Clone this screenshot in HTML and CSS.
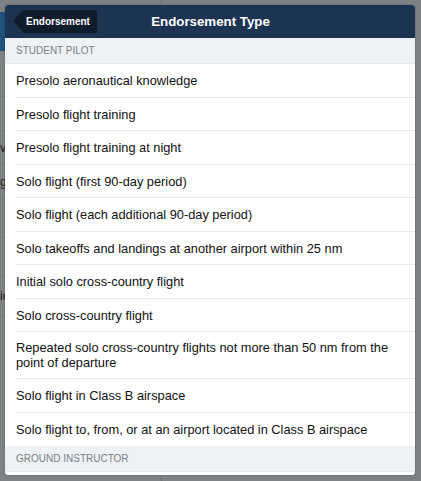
FILE: index.html
```html
<!DOCTYPE html>
<html>
<head>
<meta charset="utf-8">
<link rel="stylesheet" href="styles.css">
</head>
<body>
<div class="page">
  <div class="left-pane">
    <div class="left-bar"></div>
    <div class="left-row tall"></div>
    <div class="left-row"></div>
    <div class="left-row"><span class="frag">v</span></div>
    <div class="left-row"><span class="frag">g</span></div>
    <div class="left-row mid"></div>
    <div class="left-row mid"></div>
    <div class="left-row mid"><span class="frag">ic</span></div>
  </div>
  <div class="right-pane"></div>

  <div class="popover">
    <div class="nav">
      <div class="back"><span class="back-arrow"></span><span class="back-label">Endorsement</span></div>
      <div class="title">Endorsement Type</div>
    </div>
    <div class="list">
      <div class="section">STUDENT PILOT</div>
      <div class="row">Presolo aeronautical knowledge</div>
      <div class="row">Presolo flight training</div>
      <div class="row">Presolo flight training at night</div>
      <div class="row">Solo flight (first 90-day period)</div>
      <div class="row">Solo flight (each additional 90-day period)</div>
      <div class="row">Solo takeoffs and landings at another airport within 25 nm</div>
      <div class="row">Initial solo cross-country flight</div>
      <div class="row">Solo cross-country flight</div>
      <div class="row multi">Repeated solo cross-country flights not more than 50 nm from the point of departure</div>
      <div class="row">Solo flight in Class B airspace</div>
      <div class="row last">Solo flight to, from, or at an airport located in Class B airspace</div>
      <div class="section">GROUND INSTRUCTOR</div>
      <div class="row"></div>
    </div>
  </div>
</div>
</body>
</html>
```

FILE: styles.css
```css
html, body {
  margin: 0;
  padding: 0;
}
body {
  width: 421px;
  height: 481px;
  overflow: hidden;
  background: #7f8285;
  font-family: "Liberation Sans", Arial, sans-serif;
}
.page {
  position: relative;
  display: flex;
  width: 421px;
  height: 481px;
}
.left-pane {
  width: 162px;
  border-right: 1px solid #6c6f72;
  padding-top: 12px;
  box-sizing: border-box;
}
.left-bar {
  height: 39px;
  background: #1f527e;
}
.left-row {
  height: 34px;
  border-bottom: 1px solid #75787b;
  box-sizing: border-box;
  display: flex;
  align-items: center;
}
.left-row.tall {
  height: 46px;
}
.left-row.mid {
  height: 39px;
}
.frag {
  font-size: 12px;
  color: #1e1f20;
  margin-left: 0;
  white-space: nowrap;
}
.right-pane {
  flex: 1;
}
.popover {
  position: absolute;
  left: 5px;
  top: 5px;
  width: 410px;
  height: 470px;
  background: #ffffff;
  border-radius: 3px;
  overflow: hidden;
  box-shadow: 0 0 2px rgba(0,0,0,0.35);
  display: flex;
  flex-direction: column;
}
.nav {
  position: relative;
  height: 33px;
  flex: none;
  background: #1c3451;
  display: flex;
  align-items: center;
  justify-content: center;
}
.back {
  position: absolute;
  left: 8px;
  top: 5px;
  height: 23px;
  display: flex;
  align-items: stretch;
}
.back-arrow {
  width: 0;
  height: 0;
  border-top: 11.5px solid transparent;
  border-bottom: 11.5px solid transparent;
  border-right: 10px solid #0f1c2c;
}
.back-label {
  background: #0f1c2c;
  color: #ffffff;
  font-size: 10px;
  font-weight: bold;
  display: flex;
  align-items: center;
  padding: 0 7px 0 3px;
  border-radius: 0 2px 2px 0;
}
.title {
  color: #ffffff;
  font-size: 13.3px;
  font-weight: bold;
  margin-left: 1px;
}
.list {
  flex: 1;
  display: flex;
  flex-direction: column;
}
.section {
  height: 26px;
  flex: none;
  background: #eef2f5;
  color: #7a7f85;
  font-size: 10px;
  display: flex;
  align-items: center;
  padding-left: 11px;
  border-bottom: 1px solid #e4e9ed;
  box-sizing: border-box;
}
.row {
  flex: none;
  min-height: 33.5px;
  box-sizing: border-box;
  margin-left: 11px;
  padding: 9px 14px 8px 0;
  border-bottom: 1px solid #e3e8ec;
  font-size: 12.8px;
  line-height: 15px;
  color: #111111;
  display: flex;
  align-items: center;
}
.row.multi {
  min-height: 47px;
  padding-top: 8px;
  padding-bottom: 8px;
}
.row.last {
  border-bottom: none;
}
```
